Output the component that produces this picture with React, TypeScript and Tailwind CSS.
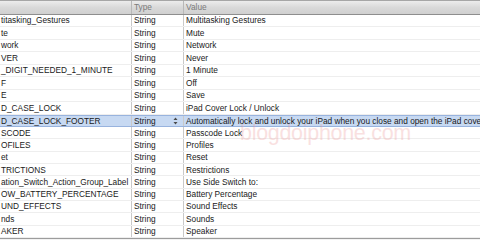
const rows = [
  { key: 'titasking_Gestures', value: 'Multitasking Gestures' },
  { key: 'te', value: 'Mute' },
  { key: 'work', value: 'Network' },
  { key: 'VER', value: 'Never' },
  { key: '_DIGIT_NEEDED_1_MINUTE', value: '1 Minute' },
  { key: 'F', value: 'Off' },
  { key: 'E', value: 'Save' },
  { key: 'D_CASE_LOCK', value: 'iPad Cover Lock / Unlock' },
  {
    key: 'D_CASE_LOCK_FOOTER',
    value: 'Automatically lock and unlock your iPad when you close and open the iPad cover.',
    selected: true
  },
  { key: 'SCODE', value: 'Passcode Lock' },
  { key: 'OFILES', value: 'Profiles' },
  { key: 'et', value: 'Reset' },
  { key: 'TRICTIONS', value: 'Restrictions' },
  { key: 'ation_Switch_Action_Group_Label', value: 'Use Side Switch to:' },
  { key: 'OW_BATTERY_PERCENTAGE', value: 'Battery Percentage' },
  { key: 'UND_EFFECTS', value: 'Sound Effects' },
  { key: 'nds', value: 'Sounds' },
  { key: 'AKER', value: 'Speaker' }
];

function Stepper() {
  return (
    <svg width="5" height="8" viewBox="0 0 5 8" className="shrink-0">
      <path d="M2.5 0.5 L4.5 3 L0.5 3 Z" fill="#4a4a4a" />
      <path d="M2.5 7.5 L4.5 5 L0.5 5 Z" fill="#4a4a4a" />
    </svg>
  );
}

export default function App() {
  return (
    <div
      className="relative w-[480px] h-[240px] overflow-hidden bg-white text-[8.3px] leading-none text-[#1a1a1a]"
      style={{ fontFamily: '"Liberation Sans", Arial, sans-serif' }}
    >
      {/* header */}
      <div className="flex h-[14.5px] border-t-[1.5px] border-t-[#a6a6a6] border-b border-b-[#8e8e8e] bg-gradient-to-b from-[#ececec] via-[#d9d9d9] to-[#d0d0d0] text-[#7b7b7b]">
        <div className="w-[132px] border-r border-[#b8b8b8]" />
        <div className="w-[52px] border-r border-[#b8b8b8] flex items-center pl-[2px]">Type</div>
        <div className="flex-1 flex items-center pl-[2px]">Value</div>
      </div>

      {rows.map((row, i) => (
        <div
          key={i}
          className={
            row.selected
              ? 'flex h-[12.3px] bg-[#c7d9f2] border-y border-[#98b3de]'
              : i < 8
                ? 'flex h-[12.55px] border-b border-[#eeeeee]'
                : 'flex h-[12.3px] border-b border-[#eeeeee]'
          }
        >
          <div className="w-[132px] border-r border-[#c9c9c9] flex items-center pl-[1px] overflow-hidden whitespace-nowrap">
            {row.key}
          </div>
          <div className="w-[52px] border-r border-[#c9c9c9] flex items-center justify-between pl-[2px] pr-[5px]">
            <span>String</span>
            {row.selected && <Stepper />}
          </div>
          <div className="flex-1 flex items-center pl-[2px] overflow-hidden whitespace-nowrap">
            {row.value}
          </div>
        </div>
      ))}

      <div className="h-[3px] border-t border-[#9c9c9c] bg-[#f2f2f2]" />

      {/* watermark */}
      <div className="pointer-events-none absolute left-[240px] top-[123px] text-[21.5px] leading-none text-[#ee9c9c] opacity-30 tracking-[-0.3px]">
        blogdoiphone.com
      </div>
    </div>
  );
}
